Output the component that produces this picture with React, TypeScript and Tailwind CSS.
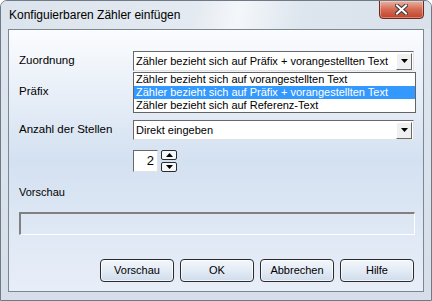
import React from "react";

// ── Dropdown options ────────────────────────────────────────────────────
const options = [
  "Zähler bezieht sich auf vorangestellten Text",
  "Zähler bezieht sich auf Präfix + vorangestellten Text",
  "Zähler bezieht sich auf Referenz-Text",
];

const font = "font-['Liberation_Sans',Arial,sans-serif]";

function Arrow({ up = false }: { up?: boolean }) {
  return (
    <svg width="7" height="4" viewBox="0 0 7 4" className={up ? "rotate-180" : ""}>
      <path d="M0 0h7L3.5 4z" fill="#000" />
    </svg>
  );
}

function Combo({ value }: { value: string }) {
  return (
    <div className="w-[281px] h-[20px] bg-white border border-t-[#696969] border-l-[#696969] border-r-[#e3e3e3] border-b-[#e3e3e3] flex items-center">
      <span className="flex-1 pl-[2px] text-[11px] text-black leading-none whitespace-nowrap overflow-hidden">
        {value}
      </span>
      <div className="w-[16px] h-[17px] mr-[1px] bg-[#f0f0f0] border border-t-white border-l-white border-r-[#696969] border-b-[#696969] flex items-center justify-center">
        <Arrow />
      </div>
    </div>
  );
}

function Btn({ label }: { label: string }) {
  return (
    <button className="w-[74px] h-[23px] rounded-[4px] border border-[#2b2b2b] bg-gradient-to-b from-[#f2f6fb] via-[#e3ebf5] to-[#cfdcec] text-[11px] text-black shadow-[inset_0_0_0_1px_rgba(255,255,255,0.7)]">
      {label}
    </button>
  );
}

export default function App() {
  return (
    <div className={`w-[432px] h-[301px] ${font} relative overflow-hidden rounded-t-[7px] border border-[#6f7a86] bg-gradient-to-b from-[#dfe6ee] to-[#d6dfe9] flex flex-col`}>
      {/* ── Title bar ─────────────────────────────────────── */}
      <div className="h-[28px] shrink-0 flex items-start relative bg-[linear-gradient(100deg,#dbe3ec_0%,#e4eaf1_45%,#f4f7fa_55%,#dde5ee_70%,#d9e1eb_100%)]">
        <span className="ml-[8px] mt-[8px] text-[12px] text-black leading-none">
          Konfiguierbaren Zähler einfügen
        </span>
        <div className="absolute right-[7px] top-[-1px] w-[45px] h-[19px] rounded-b-[4px] border border-[#6b2a1e] bg-gradient-to-b from-[#eab1a3] via-[#d46a53] to-[#c2412a] flex items-center justify-center shadow-[inset_0_0_0_1px_rgba(255,255,255,0.35)]">
          <svg width="13" height="11" viewBox="0 0 13 11">
            <path d="M2 1.5l9 8M11 1.5l-9 8" stroke="#3b3b3b" strokeWidth="4" strokeLinecap="square" />
            <path d="M2 1.5l9 8M11 1.5l-9 8" stroke="#fff" strokeWidth="2" strokeLinecap="square" />
          </svg>
        </div>
      </div>

      {/* ── Client area ───────────────────────────────────── */}
      <div className="mx-[7px] h-[263px] shrink-0 border border-[#7b8795] bg-gradient-to-b from-[#fbfcfe] via-[#d4e1f1] to-[#e8eef8] flex flex-col text-[11.5px] text-black">
        {/* Zuordnung */}
        <div className="mt-[21px] h-[20px] flex items-center relative">
          <span className="w-[124px] pl-[10px]">Zuordnung</span>
          <Combo value={options[1]} />
          <div className="absolute left-[124px] top-[21px] w-[283px] border border-[#646464] bg-white z-10 text-[11px]">
            {options.map((o, i) => (
              <div
                key={o}
                className={`h-[13px] pl-[2px] leading-[13px] whitespace-nowrap ${
                  i === 1 ? "bg-[#3399ff] text-white" : "text-black"
                }`}
              >
                {o}
              </div>
            ))}
          </div>
        </div>

        {/* Präfix */}
        <div className="mt-[11px] h-[20px] flex items-center">
          <span className="pl-[10px]">Präfix</span>
        </div>

        {/* Anzahl der Stellen */}
        <div className="mt-[18px] h-[20px] flex items-center">
          <span className="w-[124px] pl-[10px]">Anzahl der Stellen</span>
          <Combo value="Direkt eingeben" />
        </div>

        {/* Spin */}
        <div className="mt-[10px] h-[22px] flex items-center pl-[124px] gap-[3px]">
          <div className="w-[25px] h-[22px] bg-white border border-t-[#696969] border-l-[#696969] border-r-[#e3e3e3] border-b-[#e3e3e3] flex items-center justify-end pr-[3px] text-[13px]">
            2
          </div>
          <div className="flex flex-col gap-[2px]">
            <div className="w-[16px] h-[10px] rounded-[2px] border border-[#2b2b2b] bg-[#f5f7fa] flex items-center justify-center">
              <Arrow up />
            </div>
            <div className="w-[16px] h-[10px] rounded-[2px] border border-[#2b2b2b] bg-[#f5f7fa] flex items-center justify-center">
              <Arrow />
            </div>
          </div>
        </div>

        {/* Vorschau */}
        <div className="mt-[13px] h-[14px] flex items-center">
          <span className="pl-[10px] text-[11px]">Vorschau</span>
        </div>
        <div className="mt-[13px] ml-[10px] w-[396px] h-[23px] border-t-2 border-l-2 border-t-[#808080] border-l-[#808080] border-r border-b border-r-white border-b-white" />

        {/* Buttons */}
        <div className="mt-[24px] flex justify-end gap-[6px] pr-[9px]">
          <Btn label="Vorschau" />
          <Btn label="OK" />
          <Btn label="Abbrechen" />
          <Btn label="Hilfe" />
        </div>
      </div>
    </div>
  );
}
